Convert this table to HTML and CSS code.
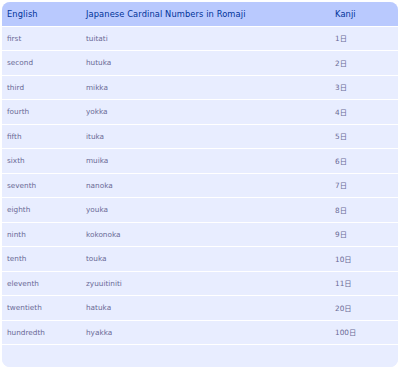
FILE: index.html
```html
<!DOCTYPE html>
<html>
<head>
<meta charset="utf-8">
<link rel="stylesheet" href="styles.css">
</head>
<body>
<div class="box">
<table class="box-table">
<colgroup><col class="c1"><col class="c2"><col class="c3"></colgroup>
<thead>
<tr><th>English</th><th>Japanese Cardinal Numbers in Romaji</th><th>Kanji</th></tr>
</thead>
<tbody>
<tr><td>first</td><td>tuitati</td><td>1日</td></tr>
<tr><td>second</td><td>hutuka</td><td>2日</td></tr>
<tr><td>third</td><td>mikka</td><td>3日</td></tr>
<tr><td>fourth</td><td>yokka</td><td>4日</td></tr>
<tr><td>fifth</td><td>ituka</td><td>5日</td></tr>
<tr><td>sixth</td><td>muika</td><td>6日</td></tr>
<tr><td>seventh</td><td>nanoka</td><td>7日</td></tr>
<tr><td>eighth</td><td>youka</td><td>8日</td></tr>
<tr><td>ninth</td><td>kokonoka</td><td>9日</td></tr>
<tr><td>tenth</td><td>touka</td><td>10日</td></tr>
<tr><td>eleventh</td><td>zyuuitiniti</td><td>11日</td></tr>
<tr><td>twentieth</td><td>hatuka</td><td>20日</td></tr>
<tr><td>hundredth</td><td>hyakka</td><td>100日</td></tr>
</tbody>
<tfoot>
<tr><td colspan="3"></td></tr>
</tfoot>
</table>
</div>
</body>
</html>
```
FILE: styles.css
```css
html, body { background: #fff; }
body { margin: 2px; font-family: "DejaVu Sans", "Noto Sans CJK JP", sans-serif; }
.box { width: 396px; border-radius: 8px; overflow: hidden; background: #e8edff; }
.box-table { width: 396px; border-collapse: collapse; table-layout: fixed; text-align: left; }
.c1 { width: 79px; }
.c2 { width: 249px; }
.c3 { width: 68px; }
.box-table th { background: #b9c9fe; color: #003399; font-size: 8.3px; letter-spacing: 0.1px; font-weight: normal; height: 24px; padding: 0 5px; box-sizing: border-box; }
.box-table td { background: #e8edff; color: #6a6a96; font-size: 7.3px; height: 24.5px; padding: 0 5px; border-top: 1px solid #fff; box-sizing: border-box; }
.box-table tfoot td { height: 22px; }
```
